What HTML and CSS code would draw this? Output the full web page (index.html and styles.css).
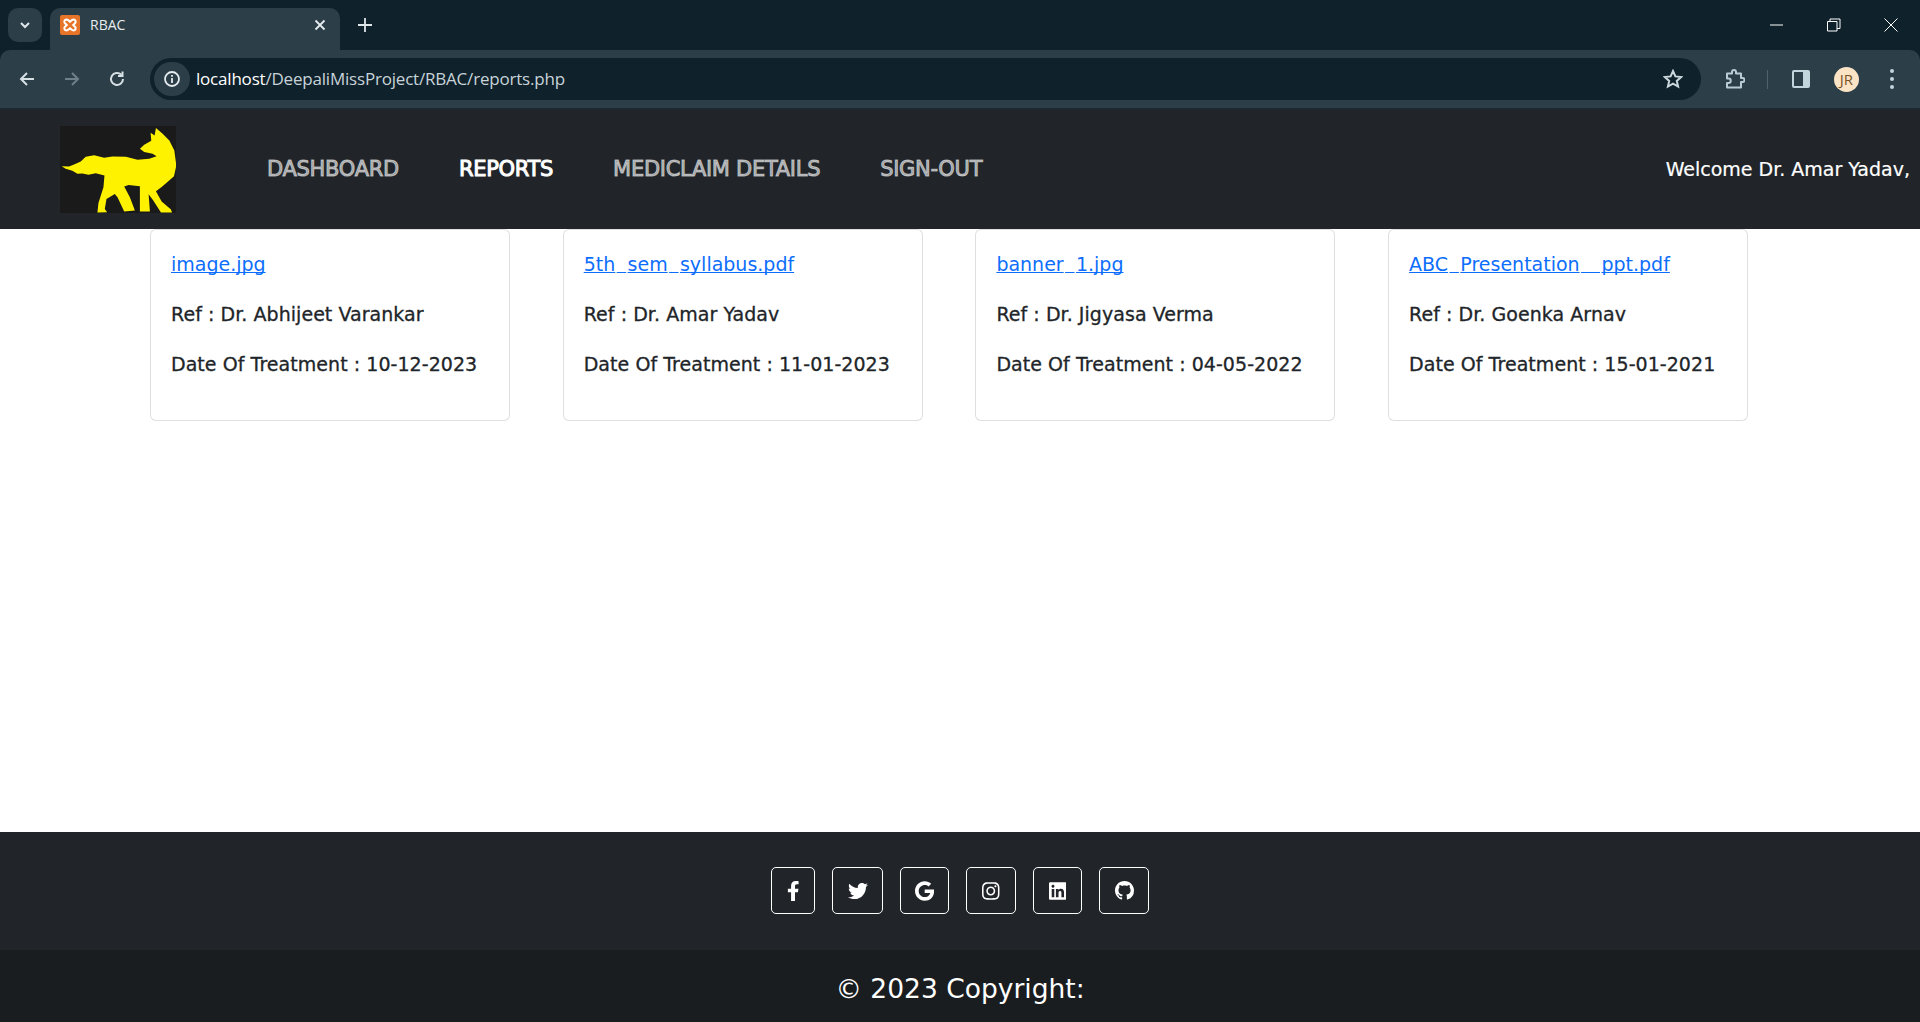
FILE: index.html
```html
<!DOCTYPE html>
<html lang="en">
<head>
<meta charset="utf-8">
<title>RBAC</title>
<link rel="stylesheet" href="styles.css">
</head>
<body>
<header class="browser">
  <div class="tabstrip">
    <button class="tab-search"><svg width="12" height="12" viewBox="0 0 12 12"><path d="M2 4l4 4 4-4" fill="none" stroke="#dfe6ea" stroke-width="2"/></svg></button>
    <div class="tab">
      <svg class="favicon" width="20" height="20" viewBox="0 0 20 20"><rect width="20" height="20" rx="2" fill="#e8742a"/><path d="M6.500 4.500a2.200 2.200 0 0 0-1.500 3.800L6.800 10 5 11.700a2.200 2.200 0 0 0 1.500 3.800c1.300 0 2.300-1 3.500-2.200 1.200 1.200 2.200 2.200 3.500 2.200a2.200 2.200 0 0 0 1.500-3.800L13.200 10 15 8.300a2.200 2.200 0 0 0-1.500-3.800c-1.300 0-2.300 1-3.500 2.200-1.200-1.200-2.200-2.200-3.500-2.200z" fill="none" stroke="#fff" stroke-width="2"/></svg>
      <span class="tab-title">RBAC</span>
      <svg class="tab-close" width="12" height="12" viewBox="0 0 12 12"><path d="M1.500 1.500l9 9M10.500 1.500l-9 9" stroke="#e6ecef" stroke-width="1.800"/></svg>
    </div>
    <svg class="new-tab" width="14" height="14" viewBox="0 0 14 14"><path d="M7 0v14M0 7h14" stroke="#dfe6ea" stroke-width="1.800"/></svg>
    <div class="win-controls">
      <svg width="14" height="14" viewBox="0 0 14 14"><path d="M0 7h13" stroke="#fff"/></svg>
      <svg width="14" height="14" viewBox="0 0 14 14"><path d="M.5 3.500h9.500v9.500H.5zM3 3.500V1h10v9.500h-3" fill="none" stroke="#fff"/></svg>
      <svg width="14" height="14" viewBox="0 0 14 14"><path d="M.5.500l13 13M13.500.500l-13 13" stroke="#fff"/></svg>
    </div>
  </div>
  <div class="toolbar">
    <svg class="tb-icon" width="18" height="18" viewBox="0 0 18 18"><path d="M16 9H3M9 3L3 9l6 6" fill="none" stroke="#d5dfe4" stroke-width="2"/></svg>
    <svg class="tb-icon" width="18" height="18" viewBox="0 0 18 18"><path d="M2 9h13M9 3l6 6-6 6" fill="none" stroke="#6f8089" stroke-width="2"/></svg>
    <svg class="tb-icon" width="18" height="18" viewBox="0 0 18 18"><path d="M15 9a6 6 0 1 1-1.800-4.300M14.500 1.500v4.500H10" fill="none" stroke="#d5dfe4" stroke-width="2"/></svg>
    <div class="omnibox">
      <span class="info"><svg width="18" height="18" viewBox="0 0 18 18"><circle cx="9" cy="9" r="7" fill="none" stroke="#e6ecef" stroke-width="1.800"/><path d="M9 8v5M9 5v1.800" stroke="#e6ecef" stroke-width="1.800"/></svg></span>
      <span class="url"><span class="host">localhost</span>/DeepaliMissProject/RBAC/reports.php</span>
      <svg class="star" width="20" height="20" viewBox="0 0 20 20"><path d="M10 2l2.400 5.400 5.800.6-4.400 3.900 1.300 5.700L10 14.700l-5.100 2.900 1.300-5.700L1.800 8l5.800-.6z" fill="none" stroke="#cbd8de" stroke-width="2"/></svg>
    </div>
    <svg class="ext" width="20" height="20" viewBox="0 0 20 20"><path d="M2 4.500h5V3a2 2 0 0 1 4 0v1.500h5v4.500h1.500a2 2 0 0 1 0 4H16v5.500H2v-4.500h1.500a2.200 2.200 0 0 0 0-4.500H2z" fill="none" stroke="#b9cbd3" stroke-width="2" stroke-linejoin="round"/></svg>
    <span class="divider"></span>
    <svg class="side" width="18" height="18" viewBox="0 0 18 18"><rect width="18" height="18" rx="2" fill="#c2d4dc"/><rect x="2" y="2" width="9" height="14" fill="#2c3e48"/></svg>
    <span class="avatar">JR</span>
    <svg class="dots" width="4" height="20" viewBox="0 0 4 20"><circle cx="2" cy="2" r="2" fill="#c2d4dc"/><circle cx="2" cy="10" r="2" fill="#c2d4dc"/><circle cx="2" cy="18" r="2" fill="#c2d4dc"/></svg>
  </div>
</header>

<nav class="navbar">
  <svg class="logo" width="116" height="87" viewBox="33 32 347 260"><rect x="33" y="32" width="347" height="260" fill="#1a1a1a"/><path d="M38 152L60 153 75 147 95 138 110 124 135 119 165 127 190 123 230 124 265 133 300 130 322 122 310 115 285 110 272 100 285 88 306 76 304 52 316 60 320 38 340 55 360 75 375 105 381 150 374 182 357 197 337 214 320 227 337 258 365 282 368 291 335 291 312 255 298 236 302 288 272 288 272 212 238 208 225 213 242 245 257 285 225 288 205 245 197 235 172 250 167 280 174 290 145 291 148 262 163 215 166 180 140 173 118 178 100 174 85 175 70 166 50 160Z" fill="#fff200"/></svg>
  <ul class="nav-links">
    <li><a href="#">DASHBOARD</a></li>
    <li><a class="active" href="#">REPORTS</a></li>
    <li><a href="#">MEDICLAIM DETAILS</a></li>
    <li><a href="#">SIGN-OUT</a></li>
  </ul>
  <span class="welcome">Welcome Dr. Amar Yadav,</span>
</nav>

<main class="reports">
  <article class="card"><a href="#">image.jpg</a><p>Ref : Dr. Abhijeet Varankar</p><p>Date Of Treatment : 10-12-2023</p></article>
  <article class="card"><a href="#">5th<span class="us">_</span>sem<span class="us">_</span>syllabus.pdf</a><p>Ref : Dr. Amar Yadav</p><p>Date Of Treatment : 11-01-2023</p></article>
  <article class="card"><a href="#">banner<span class="us">_</span>1.jpg</a><p>Ref : Dr. Jigyasa Verma</p><p>Date Of Treatment : 04-05-2022</p></article>
  <article class="card"><a href="#">ABC<span class="us">_</span>Presentation<span class="us">__</span>ppt.pdf</a><p>Ref : Dr. Goenka Arnav</p><p>Date Of Treatment : 15-01-2021</p></article>
</main>

<footer>
  <div class="social">
    <a class="s-btn s1" href="#"><svg height="20" viewBox="0 0 320 512"><path d="M279.14 288l14.22-92.66h-88.91v-60.13c0-25.35 12.42-50.06 52.24-50.06h40.42V6.26S260.43 0 225.36 0c-73.22 0-121.08 44.38-121.08 124.72v70.62H22.89V288h81.39v224h100.17V288z"/></svg></a>
    <a class="s-btn s2" href="#"><svg height="20" viewBox="0 0 512 512"><path d="M459.37 151.716c.325 4.548.325 9.097.325 13.645 0 138.72-105.583 298.558-298.558 298.558-59.452 0-114.68-17.219-161.137-47.106 8.447.974 16.568 1.299 25.34 1.299 49.055 0 94.213-16.568 130.274-44.832-46.132-.975-84.792-31.188-98.112-72.772 6.498.974 12.995 1.624 19.818 1.624 9.421 0 18.843-1.3 27.614-3.573-48.081-9.747-84.143-51.98-84.143-102.985v-1.299c13.969 7.797 30.214 12.67 47.431 13.319-28.264-18.843-46.781-51.005-46.781-87.391 0-19.492 5.197-37.36 14.294-52.954 51.655 63.675 129.3 105.258 216.365 109.807-1.624-7.797-2.599-15.918-2.599-24.04 0-57.828 46.782-104.934 104.934-104.934 30.213 0 57.502 12.67 76.67 33.137 23.715-4.548 46.456-13.32 66.599-25.34-7.798 24.366-24.366 44.833-46.132 57.827 21.117-2.273 41.584-8.122 60.426-16.243-14.292 20.791-32.161 39.308-52.628 54.253z"/></svg></a>
    <a class="s-btn s3" href="#"><svg height="20" viewBox="0 0 488 512"><path d="M488 261.8C488 403.3 391.1 504 248 504 110.8 504 0 393.2 0 256S110.8 8 248 8c66.8 0 123 24.5 166.3 64.9l-67.5 64.9C258.5 52.6 94.3 116.6 94.3 256c0 86.5 69.1 156.6 153.7 156.6 98.2 0 135-70.4 140.8-106.9H248v-85.3h236.1c2.3 12.7 3.9 24.9 3.9 41.4z"/></svg></a>
    <a class="s-btn s4" href="#"><svg height="20" viewBox="0 0 448 512"><path d="M224.1 141c-63.6 0-114.9 51.3-114.9 114.9s51.3 114.9 114.9 114.9S339 319.5 339 255.9 287.7 141 224.1 141zm0 189.6c-41.1 0-74.7-33.5-74.7-74.7s33.5-74.7 74.7-74.7 74.7 33.5 74.7 74.7-33.6 74.7-74.7 74.7zm146.4-194.3c0 14.9-12 26.8-26.8 26.8-14.9 0-26.8-12-26.8-26.8s12-26.8 26.8-26.8 26.8 12 26.8 26.8zm76.1 27.2c-1.7-35.9-9.9-67.7-36.2-93.9-26.2-26.2-58-34.4-93.9-36.2-37-2.1-147.9-2.1-184.9 0-35.8 1.7-67.6 9.9-93.9 36.1s-34.4 58-36.2 93.9c-2.1 37-2.1 147.9 0 184.9 1.7 35.9 9.9 67.7 36.2 93.9s58 34.4 93.9 36.2c37 2.1 147.9 2.1 184.9 0 35.9-1.7 67.7-9.9 93.9-36.2 26.2-26.2 34.4-58 36.2-93.9 2.1-37 2.1-147.8 0-184.8zM398.8 388c-7.8 19.6-22.9 34.7-42.6 42.6-29.5 11.7-99.5 9-132.1 9s-102.7 2.6-132.1-9c-19.6-7.8-34.7-22.9-42.6-42.6-11.7-29.5-9-99.5-9-132.1s-2.6-102.7 9-132.1c7.8-19.6 22.9-34.7 42.6-42.6 29.5-11.7 99.5-9 132.1-9s102.7-2.6 132.1 9c19.6 7.8 34.7 22.9 42.6 42.6 11.7 29.5 9 99.5 9 132.1s2.7 102.7-9 132.1z"/></svg></a>
    <a class="s-btn s5" href="#"><svg height="20" viewBox="0 0 448 512"><path d="M416 32H31.9C14.3 32 0 46.5 0 64.3v383.4C0 465.5 14.3 480 31.9 480H416c17.6 0 32-14.5 32-32.3V64.3c0-17.8-14.4-32.3-32-32.3zM135.4 416H69V202.2h66.5V416zm-33.2-243c-21.3 0-38.5-17.3-38.5-38.5S80.9 96 102.2 96c21.2 0 38.5 17.3 38.5 38.5 0 21.3-17.2 38.5-38.5 38.5zm282.1 243h-66.4V312c0-24.8-.5-56.7-34.5-56.7-34.6 0-39.9 27-39.9 54.9V416h-66.4V202.2h63.700v29.2h.9c8.9-16.8 30.6-34.5 62.9-34.5 67.2 0 79.7 44.3 79.7 101.9V416z"/></svg></a>
    <a class="s-btn s6" href="#"><svg height="19" viewBox="0 0 16 16"><path d="M8 0C3.58 0 0 3.58 0 8c0 3.54 2.29 6.53 5.47 7.59.4.07.55-.17.55-.38 0-.19-.01-.82-.01-1.49-2.01.37-2.53-.49-2.69-.94-.09-.23-.48-.94-.82-1.13-.28-.15-.68-.52-.01-.53.63-.01 1.08.58 1.23.82.72 1.21 1.87.87 2.33.66.07-.52.28-.87.51-1.07-1.78-.2-3.64-.89-3.64-3.95 0-.87.31-1.59.82-2.15-.08-.2-.36-1.02.08-2.12 0 0 .67-.21 2.2.82.64-.18 1.32-.27 2-.27s1.36.09 2 .27c1.53-1.04 2.2-.82 2.2-.82.44 1.1.16 1.92.08 2.12.51.56.82 1.27.82 2.15 0 3.07-1.87 3.75-3.65 3.95.29.25.54.73.54 1.48 0 1.07-.01 1.93-.01 2.2 0 .21.15.46.55.38A8.013 8.013 0 0016 8c0-4.42-3.58-8-8-8z"/></svg></a>
  </div>
  <div class="copyright">© 2023 Copyright:</div>
</footer>
</body>
</html>
```

FILE: styles.css
```css
* { box-sizing: border-box; }
html, body { height: 100%; }
body {
  margin: 0;
  height: 1022px;
  overflow: hidden;
  display: flex;
  flex-direction: column;
  background: #fff;
  color: #212529;
  font-family: "DejaVu Sans", sans-serif;
  font-size: 19px;
  line-height: 30px;
}
a { color: #0d6efd; }

/* browser chrome */
.browser { flex: none; height: 109px; background: #0f212a; border-bottom: 1px solid #1b2a32; }
.tabstrip { height: 50px; display: flex; align-items: flex-end; position: relative; }
.tab-search {
  width: 34px; height: 34px; margin: 0 8px 8px 8px; padding: 0;
  display: flex; align-items: center; justify-content: center;
  background: #2c3e48; border: 0; border-radius: 10px;
}
.tab {
  width: 290px; height: 42px; background: #2c3e48; border-radius: 10px 10px 0 0;
  display: flex; align-items: center; padding: 0 14px 8px 10px;
}
.favicon { flex: none; }
.tab-title { margin-left: 10px; flex: 1; font: 14px/20px "Open Sans", sans-serif; color: #e6ecef; }
.new-tab { margin: 0 0 18px 18px; }
.win-controls { margin: 0 22px 18px auto; display: flex; gap: 43px; }
.toolbar { height: 58px; background: #2c3e48; border-radius: 10px 10px 0 0; display: flex; align-items: center; padding: 0 26px 0 18px; }
.tb-icon { margin-right: 27px; flex: none; }
.omnibox {
  width: 1554px; height: 42px; margin-left: -3px; border-radius: 21px; background: #0f212a;
  display: flex; align-items: center; padding: 0 18px 0 4px;
}
.info { width: 36px; height: 34px; border-radius: 17px; background: #2c3e48; display: flex; align-items: center; justify-content: center; flex: none; }
.url { margin-left: 6px; flex: 1; font: 17px/22px "Open Sans", sans-serif; color: #c7d3d9; letter-spacing: -.2px; }
.host { color: #fff; }
.ext { margin-left: 24px; flex: none; }
.divider { width: 1px; height: 19px; margin-left: 22px; background: #4f626d; flex: none; }
.side { margin-left: 24px; flex: none; }
.avatar {
  width: 25px; height: 25px; margin-left: 24px; border-radius: 50%; background: #fbe3c6; color: #7a5326;
  font: 15px/25px "Open Sans", sans-serif; text-align: center; flex: none;
}
.dots { margin-left: 31px; flex: none; }

/* navbar */
.navbar { flex: none; height: 120px; background: #212529; display: flex; align-items: center; padding: 0 10px 0 60px; }
.logo { flex: none; }
.nav-links { list-style: none; margin: 0 0 0 91px; padding: 0; display: flex; gap: 60px; }
.nav-links a { color: rgba(255,255,255,.55); text-decoration: none; font-size: 21px; -webkit-text-stroke: 1px currentColor; letter-spacing: -.3px; }
.nav-links a.active { color: #fff; }
.welcome { margin-left: auto; color: #fff; -webkit-text-stroke: .2px currentColor; }

/* cards */
.reports { flex: 1; display: grid; grid-template-columns: repeat(4, 360px); column-gap: 52.700px; align-content: start; padding-left: 150px; }
.card { height: 192px; padding: 19px 20px; background: #fff; border: 1px solid rgba(0,0,0,.125); border-radius: 6px; }
.card a { text-decoration-skip-ink: none; }
.us { padding: 0 1.400px; color: transparent; }
.card p { margin: 20px 0 0; letter-spacing: .05px; -webkit-text-stroke: .3px currentColor; }

/* footer */
footer { flex: none; background: #212529; color: #fff; }
.social { height: 118px; display: flex; justify-content: center; align-items: flex-start; padding-top: 35px; }
.s-btn { height: 47px; display: flex; align-items: center; justify-content: center; border: 1px solid #fff; border-radius: 5px; }
.s-btn svg { fill: #fff; display: block; }
.s1 { width: 44px; }
.s2 { width: 51px; margin-left: 17px; }
.s3 { width: 49px; margin-left: 17px; }
.s4 { width: 50px; margin-left: 17px; }
.s5 { width: 49px; margin-left: 17px; }
.s6 { width: 50px; margin-left: 17px; }
.copyright { height: 72px; background: #1a1d20; text-align: center; font-size: 26.500px; line-height: 78px; }
```
